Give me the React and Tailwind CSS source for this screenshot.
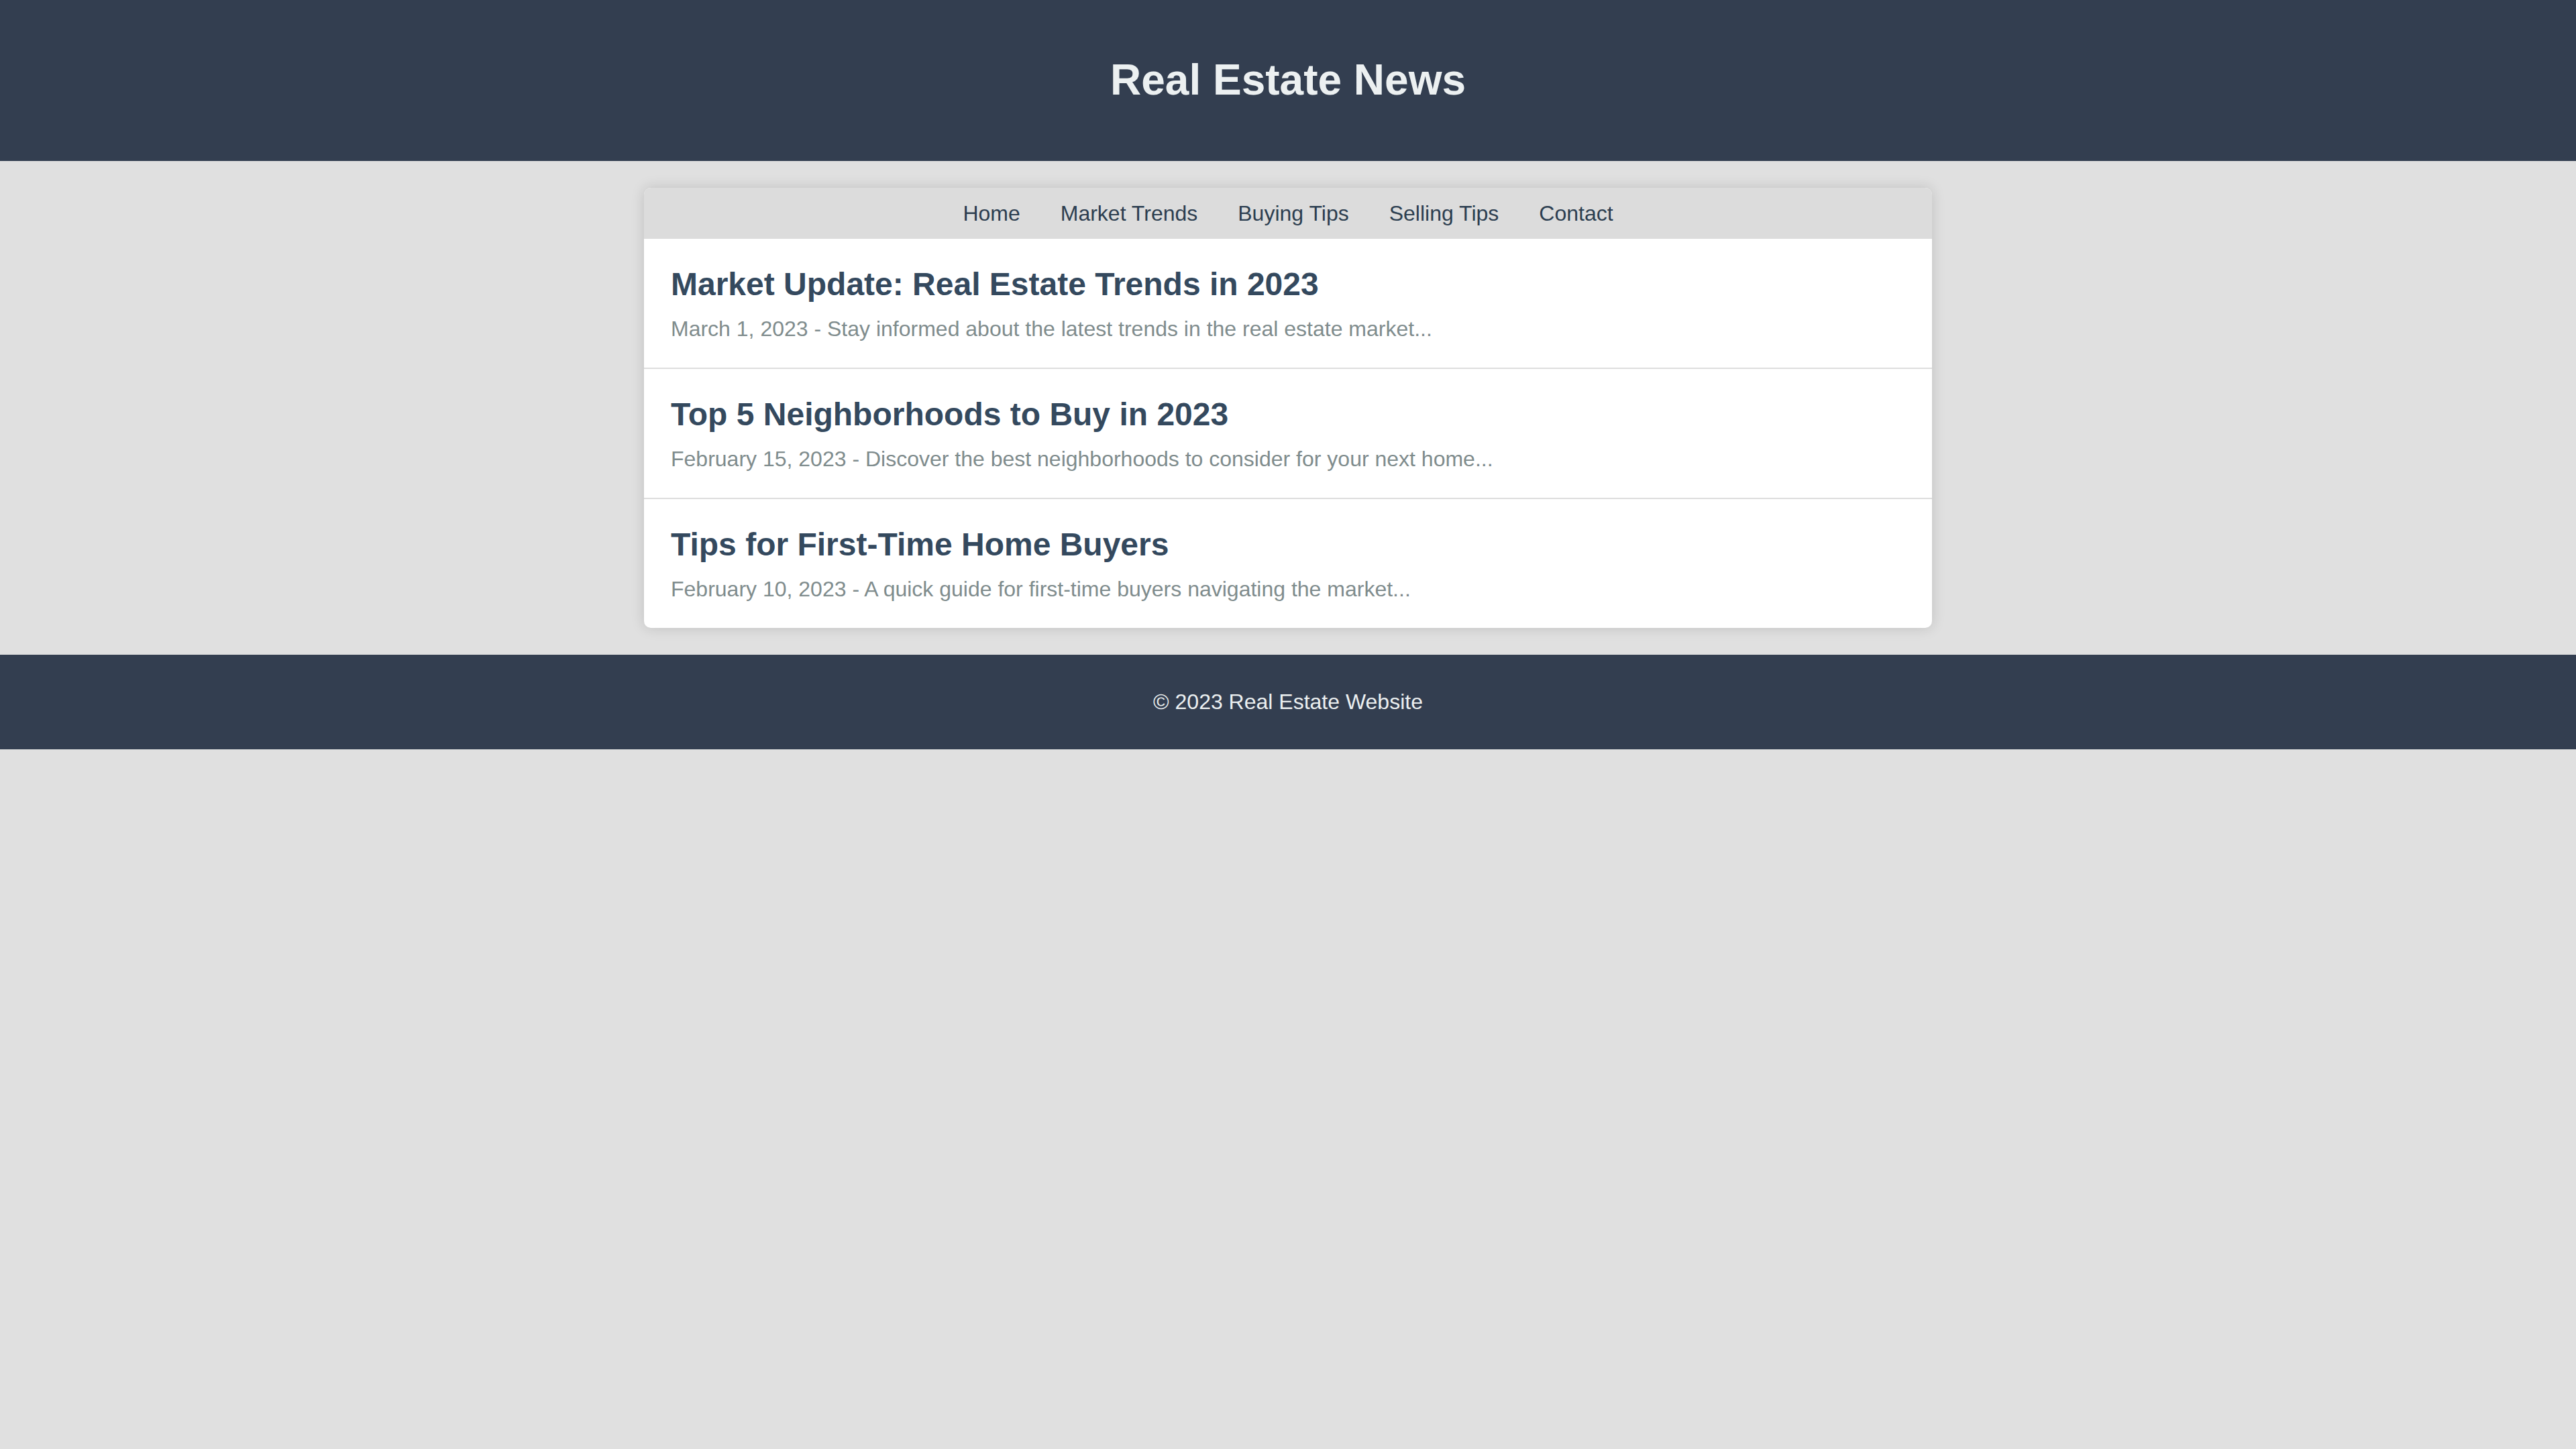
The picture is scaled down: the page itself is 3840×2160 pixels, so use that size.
const articles = [
  {
    title: "Market Update: Real Estate Trends in 2023",
    date: "March 1, 2023",
    summary: "Stay informed about the latest trends in the real estate market...",
  },
  {
    title: "Top 5 Neighborhoods to Buy in 2023",
    date: "February 15, 2023",
    summary: "Discover the best neighborhoods to consider for your next home...",
  },
  {
    title: "Tips for First-Time Home Buyers",
    date: "February 10, 2023",
    summary: "A quick guide for first-time buyers navigating the market...",
  },
];

const links = ["Home", "Market Trends", "Buying Tips", "Selling Tips", "Contact"];

export default function App() {
  return (
    <div className="min-h-screen bg-[#e0e0e0] font-['Liberation_Sans',Arial,sans-serif]">
      {/* Header */}
      <header className="bg-[#333e50] p-[40px] text-center">
        <h1 className="my-[43px] text-[64px] font-bold leading-[1.15] text-[#ecf0f1]">
          Real Estate News
        </h1>
      </header>

      {/* News card */}
      <main className="mx-auto mt-[40px] max-w-[1920px] overflow-hidden rounded-[10px] bg-white shadow-[0_0_20px_rgba(0,0,0,0.15)]">
        <nav className="bg-[#dcdcdc] py-[20px] text-center text-[32px] leading-[1.15]">
          {links.map((link) => (
            <a key={link} href="#" className="mx-[30px] text-[#2c3e50]">
              {link}
            </a>
          ))}
        </nav>
        {articles.map((a) => (
          <article
            key={a.title}
            className="border-b-2 border-[#dddddd] p-[40px] last:border-b-0"
          >
            <h2 className="mb-[20px] text-[48px] font-bold leading-[1.15] text-[#34495e]">
              {a.title}
            </h2>
            <p className="text-[32px] leading-[1.15] text-[#7f8c8d]">
              {a.date} - {a.summary}
            </p>
          </article>
        ))}
      </main>

      {/* Footer */}
      <footer className="mt-[40px] bg-[#333e50] py-[20px] text-center">
        <p className="my-[32px] text-[32px] leading-[1.15] text-[#ecf0f1]">
          © 2023 Real Estate Website
        </p>
      </footer>
    </div>
  );
}
